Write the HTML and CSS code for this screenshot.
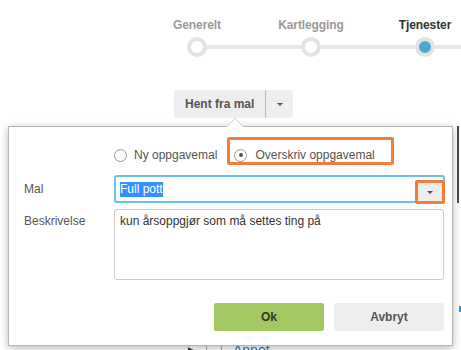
FILE: index.html
```html
<!DOCTYPE html>
<html lang="no">
  <head>
    <meta charset="UTF-8" />
    <meta name="viewport" content="width=device-width, initial-scale=1.0" />
    <title>Hent fra mal</title>
    <link rel="stylesheet" href="styles.css">
  </head>
  <body>
    <div class="stepper">
      <div class="step">
        <div class="step-label">Generelt</div>
        <div class="step-dot"></div>
      </div>
      <div class="step">
        <div class="step-label">Kartlegging</div>
        <div class="step-dot"></div>
      </div>
      <div class="step active">
        <div class="step-label">Tjenester</div>
        <div class="step-dot"></div>
      </div>
    </div>

    <div class="toolbar">
      <div class="split-btn">
        <button class="split-main">Hent fra mal</button>
        <button class="split-caret"><span class="caret"></span></button>
      </div>
    </div>

    <div class="area">
      <div class="bg-edge"></div>
      <div class="bg-mark"></div>
      <div class="bg-row">
        <span class="bg-arrow">&#9654;</span>
        <span class="bg-sep"></span>
        <span class="bg-sep"></span>
        <a class="bg-link" href="#">Annet</a>
      </div>

      <div class="popover">
        <div class="form-row radio-row">
          <div class="form-label"></div>
          <div class="form-field radios">
            <label class="radio-option">
              <span class="radio"></span>
              Ny oppgavemal
            </label>
            <label class="radio-option marked">
              <span class="radio checked"></span>
              Overskriv oppgavemal
            </label>
          </div>
        </div>

        <div class="form-row">
          <div class="form-label center">Mal</div>
          <div class="form-field">
            <div class="select-box">
              <span class="selected-text">Full pott</span>
              <span class="select-toggle"><span class="caret"></span></span>
            </div>
          </div>
        </div>

        <div class="form-row desc-row">
          <div class="form-label">Beskrivelse</div>
          <div class="form-field">
            <textarea class="desc">kun årsoppgjør som må settes ting på</textarea>
          </div>
        </div>

        <div class="actions">
          <button class="btn-ok">Ok</button>
          <button class="btn-cancel">Avbryt</button>
        </div>
      </div>
    </div>
  </body>
</html>
```

FILE: styles.css
```css
body {
  font-family: "Liberation Sans", Arial, sans-serif;
  font-size: 12px;
  margin: 0;
  padding: 0;
  background-color: #fff;
  height: 350px;
  overflow: hidden;
  color: #555;
}

button {
  font-family: inherit;
  border: none;
  cursor: pointer;
  padding: 0;
}

/* stepper */
.stepper {
  display: flex;
  padding: 18px 0 0 140px;
}

.step {
  position: relative;
  width: 114px;
  flex-shrink: 0;
  display: flex;
  flex-direction: column;
  align-items: center;
}

.step::before {
  content: "";
  position: absolute;
  top: 27px;
  left: 50%;
  width: 100%;
  height: 4px;
  background-color: #e6e6e6;
}

.step-label {
  font-weight: bold;
  line-height: 14px;
  color: #999;
  letter-spacing: -0.1px;
}

.step.active .step-label {
  color: #333;
}

.step-dot {
  position: relative;
  z-index: 1;
  margin-top: 5px;
  width: 12px;
  height: 12px;
  border: 4px solid #e3e3e3;
  border-radius: 50%;
  background-color: #fff;
}

.step.active .step-dot {
  background-color: #4ba8d2;
}

/* split button */
.toolbar {
  margin-top: 33px;
  padding-left: 174px;
}

.split-btn {
  display: inline-flex;
  height: 28px;
  background-color: #eee;
  border-radius: 2px;
}

.split-main {
  background: none;
  padding: 0 11px;
  font-size: 12px;
  font-weight: bold;
  color: #555;
}

.split-caret {
  background: none;
  width: 28px;
  border-left: 1px solid #bdbdbd;
  display: flex;
  align-items: center;
  justify-content: center;
}

.caret {
  display: block;
  width: 0;
  height: 0;
  border-top: 3px solid #555;
  border-left: 3px solid transparent;
  border-right: 3px solid transparent;
}

/* page behind the popover */
.area {
  position: relative;
  margin-top: 8px;
}

.bg-edge {
  margin: 2px 0 0 457px;
  width: 2px;
  height: 77px;
  background-color: #4a4a4a;
}

.bg-mark {
  margin: 103px 0 0 459px;
  width: 2px;
  height: 6px;
  background-color: #3d91c6;
}

.bg-row {
  display: flex;
  align-items: center;
  gap: 8px;
  margin: 30px 0 0 188px;
  height: 16px;
}

.bg-arrow {
  font-size: 9px;
  color: #333;
}

.bg-sep {
  width: 1px;
  height: 16px;
  background-color: #aaa;
  margin: 0 3px;
}

.bg-link {
  font-size: 14px;
  color: #2a7ab5;
  text-decoration: underline;
}

/* popover */
.popover {
  position: absolute;
  top: 0;
  left: 8px;
  width: 445px;
  height: 220px;
  box-sizing: border-box;
  padding: 10px 8px 14px 15px;
  background-color: #fff;
  border: 1px solid #b5b5b5;
  box-shadow: 0 2px 8px rgba(0, 0, 0, 0.28);
}

.popover::before,
.popover::after {
  content: "";
  position: absolute;
  left: 217px;
  width: 0;
  height: 0;
  border-left: 9px solid transparent;
  border-right: 9px solid transparent;
}

.popover::before {
  top: -9px;
  border-bottom: 9px solid #c8c8c8;
}

.popover::after {
  top: -8px;
  border-bottom: 9px solid #fff;
}

.form-row {
  display: flex;
  margin-bottom: 10px;
}

.form-label {
  width: 90px;
  flex-shrink: 0;
  line-height: 14px;
  padding-top: 5px;
  color: #555;
}

.form-label.center {
  padding-top: 0;
  line-height: 28px;
}

.form-field {
  flex: 1;
}

.radios {
  display: flex;
  align-items: flex-end;
  height: 28px;
}

.radio-option {
  display: flex;
  align-items: center;
  gap: 7px;
  line-height: 14px;
  color: #555;
  margin-bottom: 3px;
}

.radio-option.marked {
  margin: 0 0 0 10px;
  gap: 8px;
  padding: 8px 16px 0 4px;
  border: 3px solid #f47d3c;
  border-radius: 2px;
}

.radio {
  width: 11px;
  height: 11px;
  border: 1px solid #999;
  border-radius: 50%;
  display: flex;
  align-items: center;
  justify-content: center;
}

.radio.checked::after {
  content: "";
  width: 4px;
  height: 4px;
  border-radius: 50%;
  background-color: #555;
}

.select-box {
  position: relative;
  height: 28px;
  box-sizing: border-box;
  margin-right: -1px;
  padding-left: 4px;
  border: 2px solid #6ac3e7;
  border-radius: 3px;
  display: flex;
  align-items: center;
}

.selected-text {
  background-color: #3392ff;
  color: #fff;
  line-height: 15px;
}

.select-toggle {
  position: absolute;
  right: -2px;
  top: 3px;
  width: 30px;
  height: 24px;
  box-sizing: border-box;
  border: 3px solid #f47d3c;
  border-radius: 2px;
  background-color: #eee;
  display: flex;
  align-items: center;
  justify-content: center;
}

.desc-row {
  margin-top: -4px;
}

.desc {
  display: block;
  width: 100%;
  height: 71px;
  box-sizing: border-box;
  padding: 4px 5px;
  border: 1px solid #ccc;
  border-radius: 3px;
  font-family: inherit;
  font-size: 12px;
  line-height: 14px;
  color: #333;
  resize: none;
}

.actions {
  display: flex;
  justify-content: flex-end;
  gap: 10px;
  margin-top: 23px;
}

.actions button {
  width: 110px;
  height: 28px;
  border-radius: 2px;
  font-size: 12px;
  font-weight: bold;
}

.btn-ok {
  background-color: #a3c862;
  color: #333;
}

.btn-cancel {
  background-color: #eee;
  color: #555;
}
```
